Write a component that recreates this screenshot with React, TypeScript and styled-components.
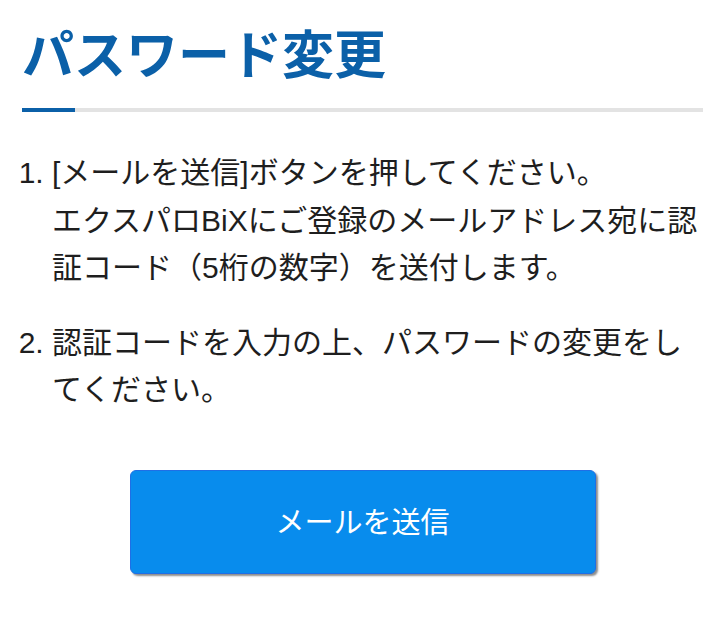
import React from 'react'
import styled, { createGlobalStyle } from 'styled-components'

const GlobalStyle = createGlobalStyle`
  body {
    margin: 0;
    background: #ffffff;
    font-family: "Liberation Sans", "Noto Sans CJK JP", sans-serif;
    color: #222222;
  }
`

const Page = styled.main`
  padding: 26px 23px 40px 22px;
`

const Title = styled.h1`
  margin: 0;
  font-family: "Noto Sans CJK JP", sans-serif;
  font-size: 52px;
  font-weight: 700;
  line-height: 52px;
  color: #0b60a8;
`

const Rule = styled.div`
  margin-top: 30px;
  height: 4px;
  background: linear-gradient(to right, #0b60a8 53px, #e3e3e3 53px);
`

const Steps = styled.ol`
  margin: 37px 0 0;
  padding-left: 30px;
  font-size: 30px;
  line-height: 47.5px;
  color: #1e1e1e;
`

const Step = styled.li`
  & + & {
    margin-top: 27px;
  }
`

const SendButton = styled.button`
  display: block;
  width: 466px;
  height: 104px;
  margin: 56px auto 0;
  padding: 0 0 4px;
  border: 1.5px solid #1f6fe6;
  border-radius: 6px;
  background: #088ced;
  box-shadow: 2px 2px 2px rgba(0, 0, 0, 0.45);
  color: #ffffff;
  font-family: "Noto Sans CJK JP", sans-serif;
  font-size: 29px;
  cursor: pointer;
`

const App = () => (
  <>
    <GlobalStyle />
    <Page>
      <Title>パスワード変更</Title>
      <Rule />
      <Steps>
        <Step>
          [メールを送信]ボタンを押してください。
          <br />
          エクスパロBiXにご登録のメールアドレス宛に認証コード（5桁の数字）を送付します。
        </Step>
        <Step>認証コードを入力の上、パスワードの変更をしてください。</Step>
      </Steps>
      <SendButton type="button">メールを送信</SendButton>
    </Page>
  </>
)

export default App
